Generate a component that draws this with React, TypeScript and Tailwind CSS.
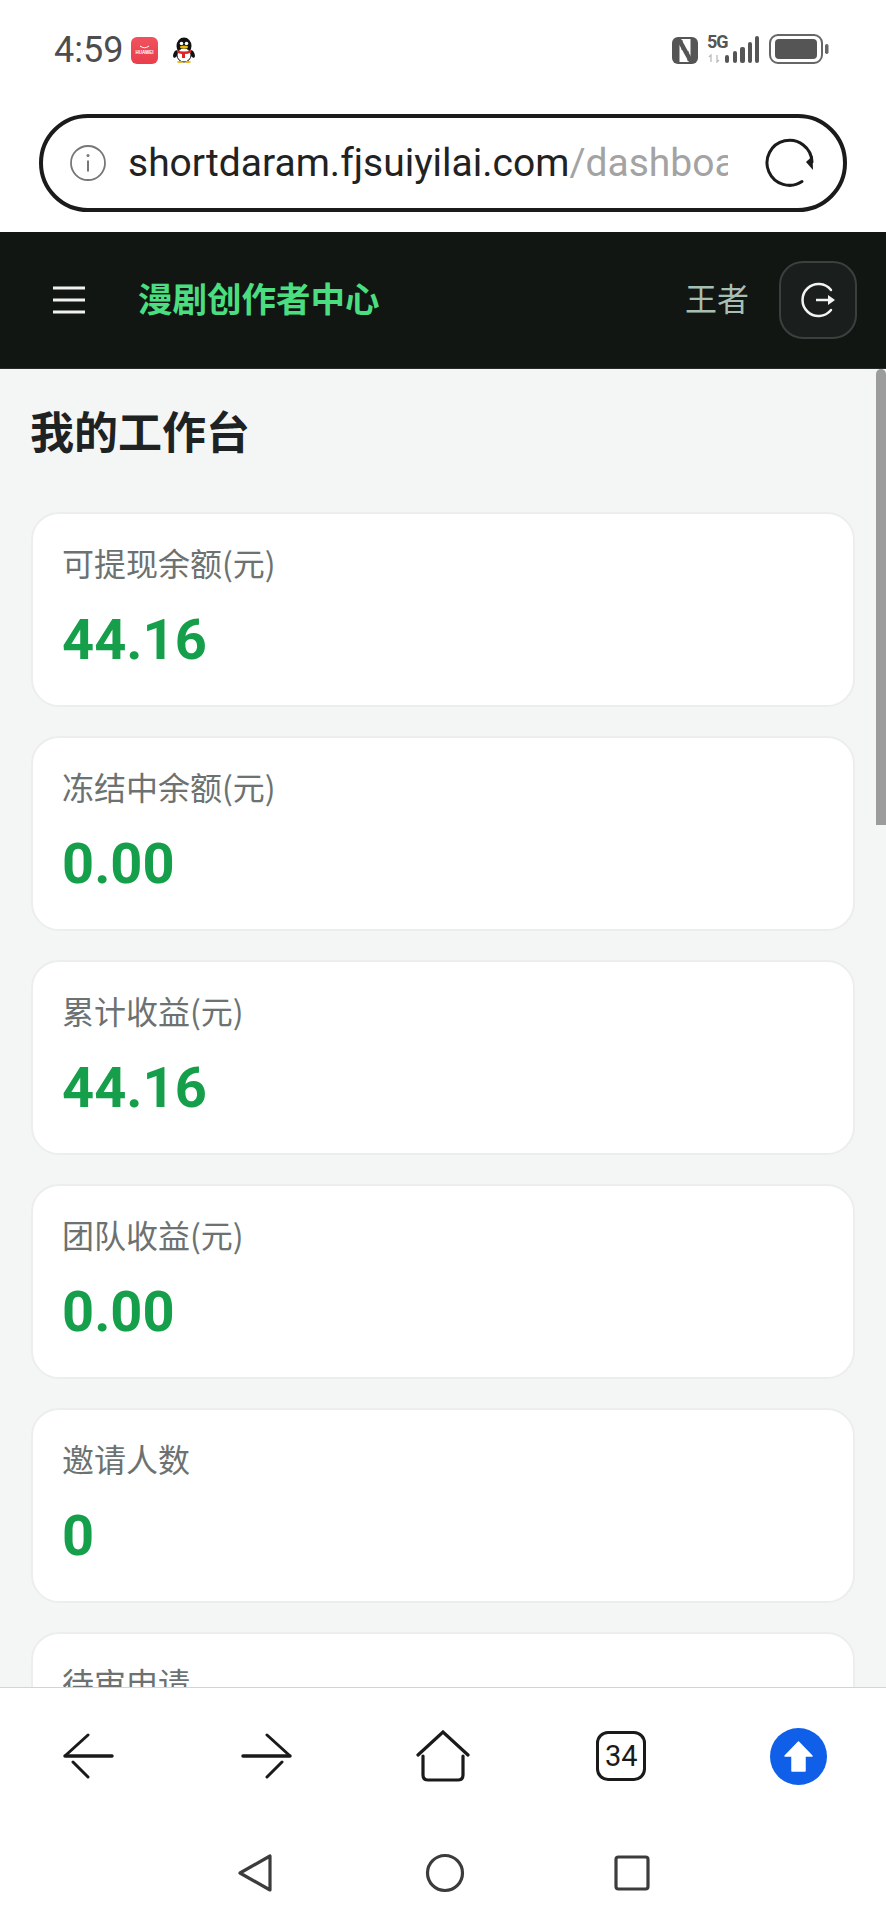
const cjk = "font-['Noto_Sans_CJK_SC',sans-serif]";

const stats = [
  { label: "可提现余额(元)", value: "44.16" },
  { label: "冻结中余额(元)", value: "0.00" },
  { label: "累计收益(元)", value: "44.16" },
  { label: "团队收益(元)", value: "0.00" },
  { label: "邀请人数", value: "0" },
  { label: "待审申请", value: "" },
];

function StatusBar() {
  return (
    <div className="h-[114px] shrink-0 flex items-start justify-between pt-[34px] pl-[54px] pr-[57px]">
      <div className="flex items-center h-[32px]">
        <span className="text-[36px] leading-[32px] text-[#4d4d4d] font-['Roboto',sans-serif] w-[77px]">4:59</span>
        <div className="w-[27px] h-[27px] rounded-[6px] bg-gradient-to-b from-[#f0525d] to-[#ea3e4c] flex flex-col items-center justify-center">
          <svg width="11" height="4" viewBox="0 0 11 4"><path d="M1 1q4.500 3.500 9 0" fill="none" stroke="#fff" strokeWidth="1" /></svg>
          <span className="text-[4.500px] leading-[6px] mt-[1px] text-white font-['Liberation_Sans',sans-serif] font-bold">HUAWEI</span>
        </div>
        <svg className="ml-[15px]" width="22" height="26" viewBox="0 0 22 26">
          <ellipse cx="11" cy="9" rx="7.500" ry="8.500" fill="#111" />
          <ellipse cx="2.500" cy="17" rx="2" ry="4" fill="#111" transform="rotate(20 2.500 17)" />
          <ellipse cx="19.500" cy="17" rx="2" ry="4" fill="#111" transform="rotate(-20 19.500 17)" />
          <ellipse cx="11" cy="18" rx="7" ry="7" fill="#fff" stroke="#111" strokeWidth="1" />
          <circle cx="8.500" cy="6.500" r="1.800" fill="#fff" />
          <circle cx="13.500" cy="6.500" r="1.800" fill="#fff" />
          <ellipse cx="11" cy="10" rx="4" ry="1.500" fill="#eab308" />
          <path d="M4 13q7 3 14 0v2.500q-3 1.500-6 1.500v4h-3v-4q-3-.5-5-1.500z" fill="#dc2626" />
          <ellipse cx="7" cy="25" rx="3" ry="1" fill="#eab308" />
          <ellipse cx="15" cy="25" rx="3" ry="1" fill="#eab308" />
        </svg>
      </div>
      <div className="flex items-start">
        <svg width="26" height="27" viewBox="0 0 26 27" className="mt-[3px]">
          <rect width="26" height="27" rx="6" fill="#555" />
          <rect x="7.500" y="2" width="11" height="23" fill="#fff" />
          <path d="M6 1L20 26" stroke="#555" strokeWidth="4.500" />
          <path d="M10 3v10M16 24V14" stroke="#555" strokeWidth="1" />
        </svg>
        <div className="ml-[9px] w-[20px] h-[29px] flex flex-col">
          <span className="text-[18px] leading-[15px] font-bold text-[#555] font-['Roboto',sans-serif] tracking-[-1px] whitespace-nowrap">5G</span>
          <svg width="16" height="9" viewBox="0 0 16 9" className="mt-[5px]">
            <path d="M4 8V1L2 3M10 1v7l2-2" fill="none" stroke="#bbb" strokeWidth="1.300" />
          </svg>
        </div>
        <svg width="34" height="28" viewBox="0 0 34 28" className="-ml-[2px] mt-[2px]">
          <rect x="0" y="19" width="4" height="8" rx="2" fill="#555" />
          <rect x="8" y="15" width="4" height="12" rx="2" fill="#555" />
          <rect x="15" y="11" width="5" height="16" rx="2" fill="#555" />
          <rect x="23" y="6" width="4" height="21" rx="2" fill="#555" />
          <rect x="30" y="0" width="4" height="27" rx="2" fill="#555" />
        </svg>
        <svg width="60" height="30" viewBox="0 0 60 30" className="ml-[10px]">
          <rect x="1" y="1" width="52" height="28" rx="8" fill="none" stroke="#666" strokeWidth="2" />
          <rect x="6" y="5" width="42" height="20" rx="4" fill="#555" />
          <rect x="56" y="10" width="3.500" height="10" rx="1.700" fill="#666" />
        </svg>
      </div>
    </div>
  );
}

function UrlBar() {
  return (
    <div className="mx-[39px] w-[808px] h-[98px] shrink-0 rounded-[49px] border-[4px] border-[#1b1b1b] bg-white flex items-center box-border">
      <svg width="36" height="36" viewBox="0 0 36 36" className="ml-[27px] shrink-0">
        <circle cx="18" cy="18" r="17" fill="none" stroke="#777" strokeWidth="1.800" />
        <circle cx="18" cy="10.500" r="1.500" fill="#777" />
        <path d="M18 15.500v11" stroke="#777" strokeWidth="2" />
      </svg>
      <div className="ml-[22px] w-[600px] overflow-hidden whitespace-nowrap text-[39px] leading-[50px] font-['Roboto',sans-serif] text-[#222]">
        shortdaram.fjsuiyilai.com<span className="text-[#a3a3a3]">/dashboard</span>
      </div>
      <svg width="50" height="50" viewBox="0 0 50 50" className="ml-[37px] shrink-0">
        <path d="M37 43.500A22.500 22.500 0 1 1 47 24" fill="none" stroke="#1b1b1b" strokeWidth="3" strokeLinecap="round" />
        <path d="M47.500 18l.5 14-7-8z" fill="#1b1b1b" />
      </svg>
    </div>
  );
}

function Header() {
  return (
    <header className="mt-[20px] h-[137px] shrink-0 bg-[#111613] border-b border-[#262b29] flex items-center">
      <svg width="32" height="28" viewBox="0 0 32 28" className="ml-[53px] shrink-0">
        <path d="M0 2h32M0 14h32M0 26h32" stroke="#f1f1f1" strokeWidth="3" />
      </svg>
      <span className={`ml-[53px] mb-[6px] text-[34.500px] leading-[44px] font-semibold text-[#4ade80] ${cjk}`}>漫剧创作者中心</span>
      <span className={`ml-auto mb-[6px] text-[32px] leading-[40px] text-[#a7bfb3] ${cjk}`}>王者</span>
      <button className="ml-[30px] mr-[29px] w-[78px] h-[78px] rounded-[24px] border-2 border-[#3b403e] bg-[#1a1f1d] flex items-center justify-center box-border">
        <svg width="36" height="36" viewBox="0 0 36 36">
          <path d="M31 8A16 16 0 1 0 31 28" fill="none" stroke="#f3f3f3" strokeWidth="2.500" strokeLinecap="round" />
          <path d="M16 18h17" stroke="#f3f3f3" strokeWidth="2.500" />
          <path d="M28 13l7 5-7 5z" fill="#f3f3f3" />
        </svg>
      </button>
    </header>
  );
}

function Card({ label, value }: { label: string; value: string }) {
  return (
    <div className="h-[195px] shrink-0 rounded-[28px] bg-white border-2 border-[#eceeee] box-border pt-[28px] pl-[29px]">
      <div className={`text-[32px] leading-[40px] text-[#6b7271] ${cjk}`}>{label}</div>
      {value && (
        <div className="mt-[23px] text-[56px] leading-[70px] font-bold text-[#169f4a] font-['Roboto',sans-serif]">{value}</div>
      )}
    </div>
  );
}

function BottomBar() {
  return (
    <div className="h-[233px] shrink-0 bg-white border-t border-[#d2d5d6] box-border">
      <div className="grid grid-cols-5 h-[136px] items-center text-[#1a1a1a]">
        <div className="flex justify-center">
          <svg width="52" height="46" viewBox="0 0 52 46">
            <path d="M2 23h47" stroke="#1a1a1a" strokeWidth="3.500" strokeLinecap="round" />
            <path d="M25 2L3 22M10 29l15 15" fill="none" stroke="#1a1a1a" strokeWidth="3" strokeLinecap="round" />
          </svg>
        </div>
        <div className="flex justify-center">
          <svg width="52" height="46" viewBox="0 0 52 46">
            <path d="M3 23h47" stroke="#1a1a1a" strokeWidth="3.500" strokeLinecap="round" />
            <path d="M27 2l22 20M42 29L27 44" fill="none" stroke="#1a1a1a" strokeWidth="3" strokeLinecap="round" />
          </svg>
        </div>
        <div className="flex justify-center">
          <svg width="54" height="52" viewBox="0 0 54 52">
            <path d="M2 25L27 2l25 23" fill="none" stroke="#1a1a1a" strokeWidth="3.200" strokeLinecap="round" />
            <path d="M7 26v19q0 5 5 5h30q5 0 5-5V26" fill="none" stroke="#1a1a1a" strokeWidth="3.200" strokeLinecap="round" />
          </svg>
        </div>
        <div className="flex justify-center">
          <div className="w-[50px] h-[50px] ml-[2px] rounded-[12px] border-[3px] border-[#1a1a1a] flex items-center justify-center box-border text-[29px] leading-none text-[#1a1a1a] font-['Roboto',sans-serif]">34</div>
        </div>
        <div className="flex justify-center">
          <svg width="57" height="57" viewBox="0 0 57 57" className="ml-[2px]">
            <circle cx="28.500" cy="28.500" r="28.500" fill="#0f5fe8" />
            <path d="M28.500 14L42 28H35V43H22V28H15z" fill="#fff" strokeLinejoin="round" stroke="#fff" strokeWidth="1.500" />
          </svg>
        </div>
      </div>
      <div className="flex justify-center items-center gap-[149px] mt-[29px]">
        <svg width="40" height="40" viewBox="0 0 40 40">
          <path d="M35 3v34L5 20z" fill="none" stroke="#3c3c3c" strokeWidth="3.200" strokeLinejoin="round" />
        </svg>
        <svg width="40" height="40" viewBox="0 0 40 40" className="ml-[1px] -mr-[2px]">
          <circle cx="20" cy="20" r="17.500" fill="none" stroke="#3c3c3c" strokeWidth="3.200" />
        </svg>
        <svg width="40" height="40" viewBox="0 0 40 40">
          <rect x="4" y="4" width="32" height="32" rx="2.500" fill="none" stroke="#3c3c3c" strokeWidth="3.200" />
        </svg>
      </div>
    </div>
  );
}

export default function App() {
  return (
    <div className="w-[886px] h-[1920px] bg-white flex flex-col overflow-hidden">
      <StatusBar />
      <UrlBar />
      <Header />
      <main className="relative flex-1 min-h-0 overflow-hidden bg-[#f4f6f6] pl-[31px] pr-[31px] pt-[35px]">
        <div className="absolute right-0 top-0 w-[10px] h-[456px] rounded-t-[5px] bg-[#9c9c9c]" />
        <h1 className={`-ml-[1px] text-[44px] leading-[52px] font-bold text-[#1f2222] ${cjk}`}>我的工作台</h1>
        <div className="mt-[56px] flex flex-col gap-[29px]">
          {stats.map((s) => (
            <Card key={s.label} label={s.label} value={s.value} />
          ))}
        </div>
      </main>
      <BottomBar />
    </div>
  );
}
